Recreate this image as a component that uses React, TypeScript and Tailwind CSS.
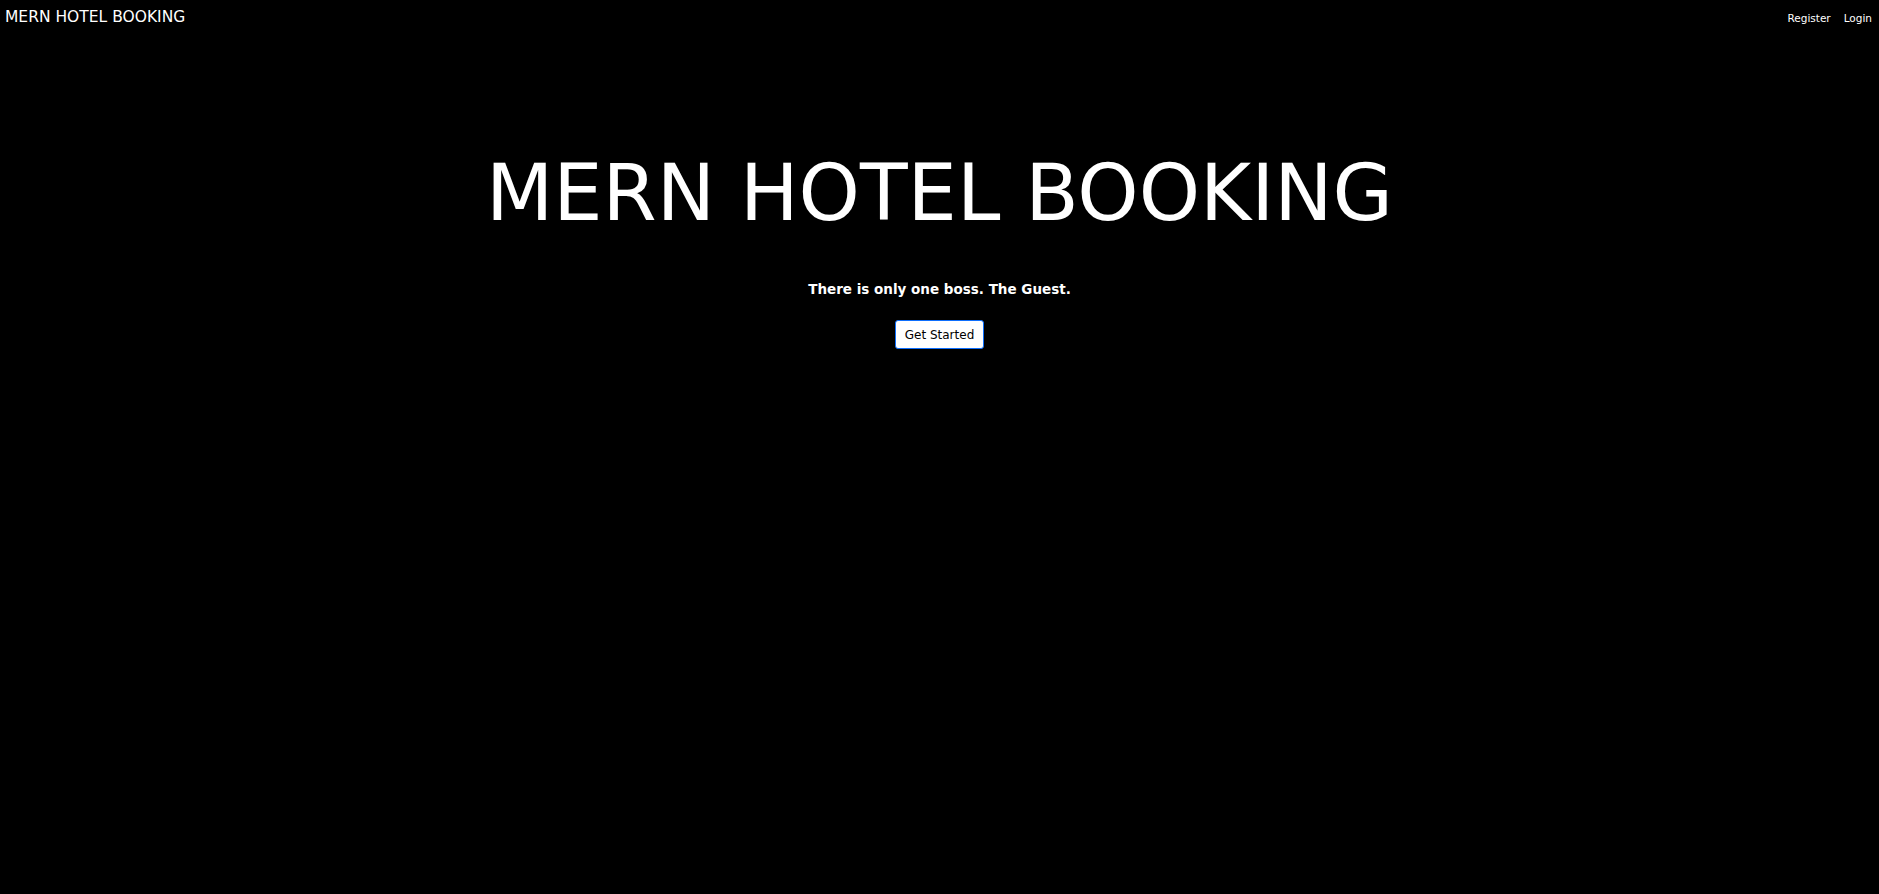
export default function App() {
  return (
    <div className="min-h-screen bg-black text-white font-['DejaVu_Sans',sans-serif]">
      {/* Navbar */}
      <nav className="flex h-[36px] items-center justify-between px-[5px]">
        <a href="#" className="text-[15.5px] leading-none text-white">
          MERN HOTEL BOOKING
        </a>
        <div className="flex items-center gap-[13px] pr-[2px] text-[10.5px] leading-none">
          <a href="#" className="text-white">Register</a>
          <a href="#" className="text-white">Login</a>
        </div>
      </nav>

      {/* Hero */}
      <section className="flex flex-col items-center pt-[118px]">
        <h1 className="text-[78px] leading-none">MERN HOTEL BOOKING</h1>
        <p className="mt-[47px] text-[13.5px] font-bold">There is only one boss. The Guest.</p>
        <button className="mt-[21px] h-[29px] rounded-[3px] border border-[#0d6efd] bg-white px-[9px] text-[12px] text-black">
          Get Started
        </button>
      </section>
    </div>
  );
}
